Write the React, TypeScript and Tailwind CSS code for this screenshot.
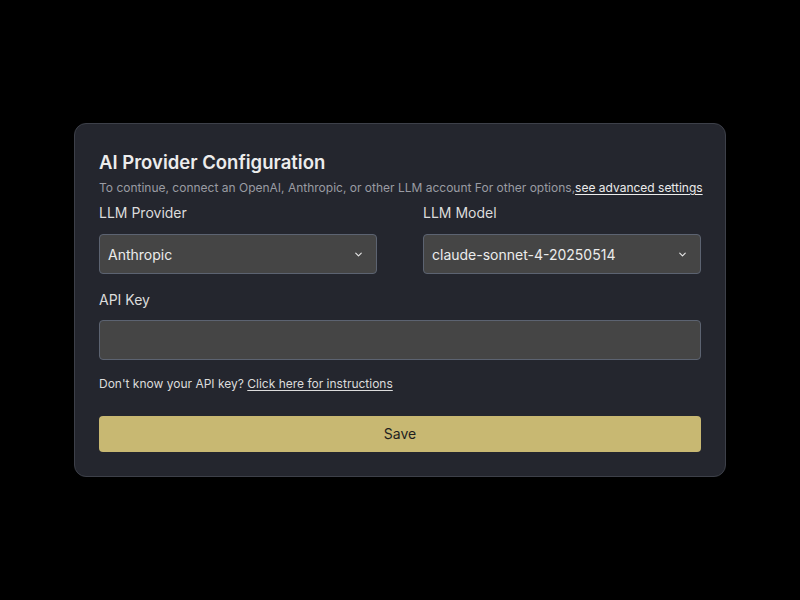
import React from 'react';

const Chevron = () => (
  <svg width="11" height="11" viewBox="0 0 24 24" fill="none" stroke="currentColor" strokeWidth="2.5" strokeLinecap="round" strokeLinejoin="round">
    <path d="M6 9l6 6 6-6" />
  </svg>
);

const Select = ({ value }: { value: string }) => (
  <div className="flex items-center justify-between h-10 px-2 pr-3 rounded-[4px] border border-[#5c6371] bg-[#454545] text-[14px] text-[#ececec]">
    <span>{value}</span>
    <span className="text-[#e5e5e5]"><Chevron /></span>
  </div>
);

export default function App() {
  return (
    <div className="min-h-screen bg-black flex items-center justify-center" style={{ fontFamily: 'Inter, "Noto Sans", sans-serif' }}>
      <div className="w-[652px] rounded-xl border border-[#3d4049] bg-[#24262e] p-6">
        <h1 className="text-[18.5px] font-semibold leading-7 text-[#ececec]">AI Provider Configuration</h1>
        <p className="mt-1 whitespace-nowrap text-xs leading-4 text-[#9a9ca3]">
          To continue, connect an OpenAI, Anthropic, or other LLM account For other options,
          <a className="text-[#ececec] underline underline-offset-2">see advanced settings</a>
        </p>

        <div className="mt-[7px] grid grid-cols-2 gap-[46px]">
          <div>
            <label className="block text-sm leading-5 text-[#dcdcdc]">LLM Provider</label>
            <div className="mt-[11px]"><Select value="Anthropic" /></div>
          </div>
          <div>
            <label className="block text-sm leading-5 text-[#dcdcdc]">LLM Model</label>
            <div className="mt-[11px]"><Select value="claude-sonnet-4-20250514" /></div>
          </div>
        </div>

        <label className="mt-4 block text-sm leading-5 text-[#dcdcdc]">API Key</label>
        <input className="mt-[10px] block w-full h-10 px-2 rounded-[4px] border border-[#5c6371] bg-[#454545] text-sm text-[#ececec] outline-none" />

        <p className="mt-4 text-xs leading-4 text-[#dcdcdc]">
          Don't know your API key? <a className="underline underline-offset-2">Click here for instructions</a>
        </p>

        <button className="mt-6 w-full h-9 rounded-[4px] bg-[#c8b872] text-sm text-[#1f1f1f]">Save</button>
      </div>
    </div>
  );
}
